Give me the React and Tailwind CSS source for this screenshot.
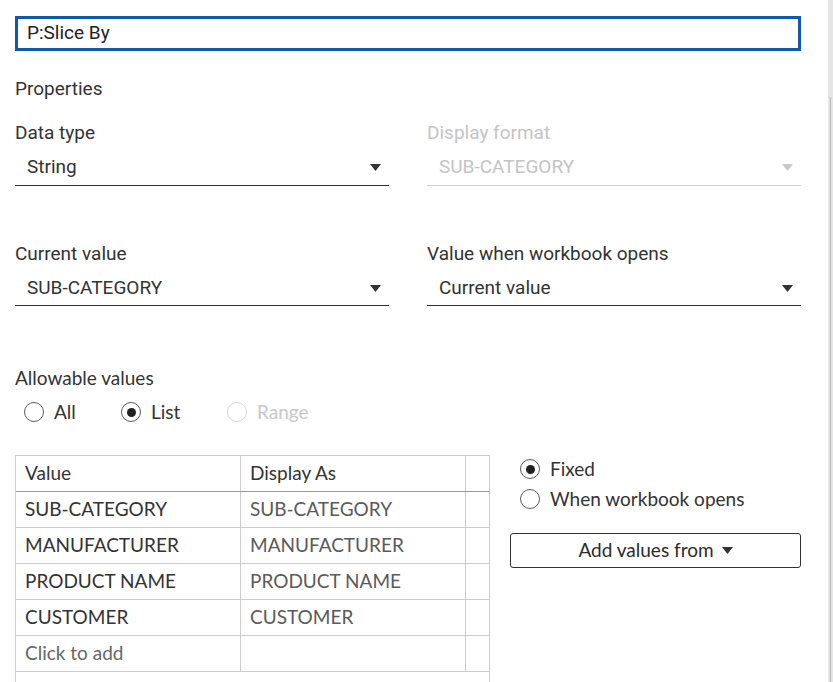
import React from "react";

const top = "font-['Roboto',sans-serif]";
const lato = "font-['Lato',sans-serif]";

function Tri({ className = "" }) {
  return (
    <svg width="11" height="7" viewBox="0 0 11 7" className={className}>
      <path d="M0 0 H11 L5.5 7 Z" fill="currentColor" />
    </svg>
  );
}

function Select({ value, disabled, pb = "pb-[7px]" }) {
  return (
    <div
      className={`flex items-center justify-between pl-[12px] pr-[8px] pt-[12px] ${pb} border-b leading-[22px] text-[19px] ${
        disabled ? "border-[#cfcfcf] text-[#c4c4c4]" : "border-[#333333] text-[#333333]"
      }`}
    >
      <span>{value}</span>
      <Tri className={disabled ? "text-[#c8c8c8]" : "text-[#333333]"} />
    </div>
  );
}

function Radio({ checked, disabled, label, className = "" }) {
  return (
    <div className={`flex items-center h-[22px] ${className}`}>
      <div
        className={`w-[20px] h-[20px] rounded-full border-[1.5px] flex items-center justify-center shrink-0 ${
          disabled ? "border-[#d6d6d6]" : "border-[#5a5a5a]"
        }`}
      >
        {checked && <div className="w-[9px] h-[9px] rounded-full bg-[#222222]" />}
      </div>
      <span
        className={`ml-[10px] text-[19px] leading-[22px] ${
          disabled ? "text-[#c8c8c8]" : "text-[#333333]"
        }`}
      >
        {label}
      </span>
    </div>
  );
}

const rows = [
  ["SUB-CATEGORY", "SUB-CATEGORY"],
  ["MANUFACTURER", "MANUFACTURER"],
  ["PRODUCT NAME", "PRODUCT NAME"],
  ["CUSTOMER", "CUSTOMER"],
];

export default function App() {
  return (
    <div className="w-[833px] h-[682px] bg-white overflow-hidden flex">
      <div className="w-[828px] pl-[15px] pt-[16px]">
        <div className={`${top} w-[786px] h-[35px] border-[3px] border-[#1259a8] flex items-center pl-[9px] text-[19px] text-[#222222]`}>
          P:Slice By
        </div>

        <div className={`${top} mt-[27px] text-[19px] leading-[22px] text-[#333333]`}>Properties</div>

        <div className={`${top} w-[786px] grid grid-cols-2 gap-x-[38px] mt-[22px]`}>
          <div>
            <div className="text-[19px] leading-[22px] text-[#333333]">Data type</div>
            <Select value="String" />
          </div>
          <div>
            <div className="text-[19px] leading-[22px] text-[#c4c4c4]">Display format</div>
            <Select value="SUB-CATEGORY" disabled />
          </div>
          <div className="mt-[57px]">
            <div className="text-[19px] leading-[22px] text-[#333333]">Current value</div>
            <Select value="SUB-CATEGORY" pb="pb-[6px]" />
          </div>
          <div className="mt-[57px]">
            <div className="text-[19px] leading-[22px] text-[#333333]">Value when workbook opens</div>
            <Select value="Current value" pb="pb-[6px]" />
          </div>
        </div>

        <div className={`${lato} mt-[61px] text-[19px] leading-[22px] text-[#333333]`}>Allowable values</div>
        <div className={`${lato} flex mt-[12px] pl-[9px]`}>
          <Radio label="All" className="w-[97px]" />
          <Radio label="List" checked className="w-[106px]" />
          <Radio label="Range" disabled />
        </div>

        <div className={`${lato} flex mt-[32px]`}>
          <div className="w-[475px] border-l border-r border-t border-[#cccccc] text-[19px]">
            <div className="flex h-[36px] border-b border-[#9a9a9a] text-[#333333]">
              <div className="w-[225px] border-r border-[#cccccc] pl-[9px] flex items-center">Value</div>
              <div className="w-[225px] border-r border-[#cccccc] pl-[9px] flex items-center">Display As</div>
              <div className="flex-1" />
            </div>
            {rows.map(([a, b]) => (
              <div key={a} className="flex h-[36px] border-b border-[#cccccc]">
                <div className="w-[225px] border-r border-[#cccccc] pl-[9px] flex items-center text-[#333333]">{a}</div>
                <div className="w-[225px] border-r border-[#cccccc] pl-[9px] flex items-center text-[#5a5a5a]">{b}</div>
                <div className="flex-1" />
              </div>
            ))}
            <div className="flex h-[36px] border-b border-[#cccccc]">
              <div className="w-[225px] border-r border-[#cccccc] pl-[9px] flex items-center text-[#666666]">Click to add</div>
              <div className="w-[225px] border-r border-[#cccccc]" />
              <div className="flex-1" />
            </div>
            <div className="h-[40px]" />
          </div>

          <div className="ml-[20px] w-[291px] pt-[3px]">
            <Radio label="Fixed" checked className="ml-[10px]" />
            <Radio label="When workbook opens" className="ml-[10px] mt-[8px]" />
            <div className="mt-[23px] h-[35px] rounded-[3px] border border-[#333333] flex items-center justify-center text-[19px] text-[#2b2b2b]">
              <span>Add values from</span>
              <Tri className="ml-[8px] text-[#333333]" />
            </div>
          </div>
        </div>
      </div>

      <div className="w-[5px] h-[682px] bg-[#e6e6e6] flex">
        <div className="w-[2px]" />
        <div className="w-[1px] h-full flex flex-col">
          <div className="h-[97px]" />
          <div className="flex-1 bg-[#b8b8b8]" />
        </div>
      </div>
    </div>
  );
}
